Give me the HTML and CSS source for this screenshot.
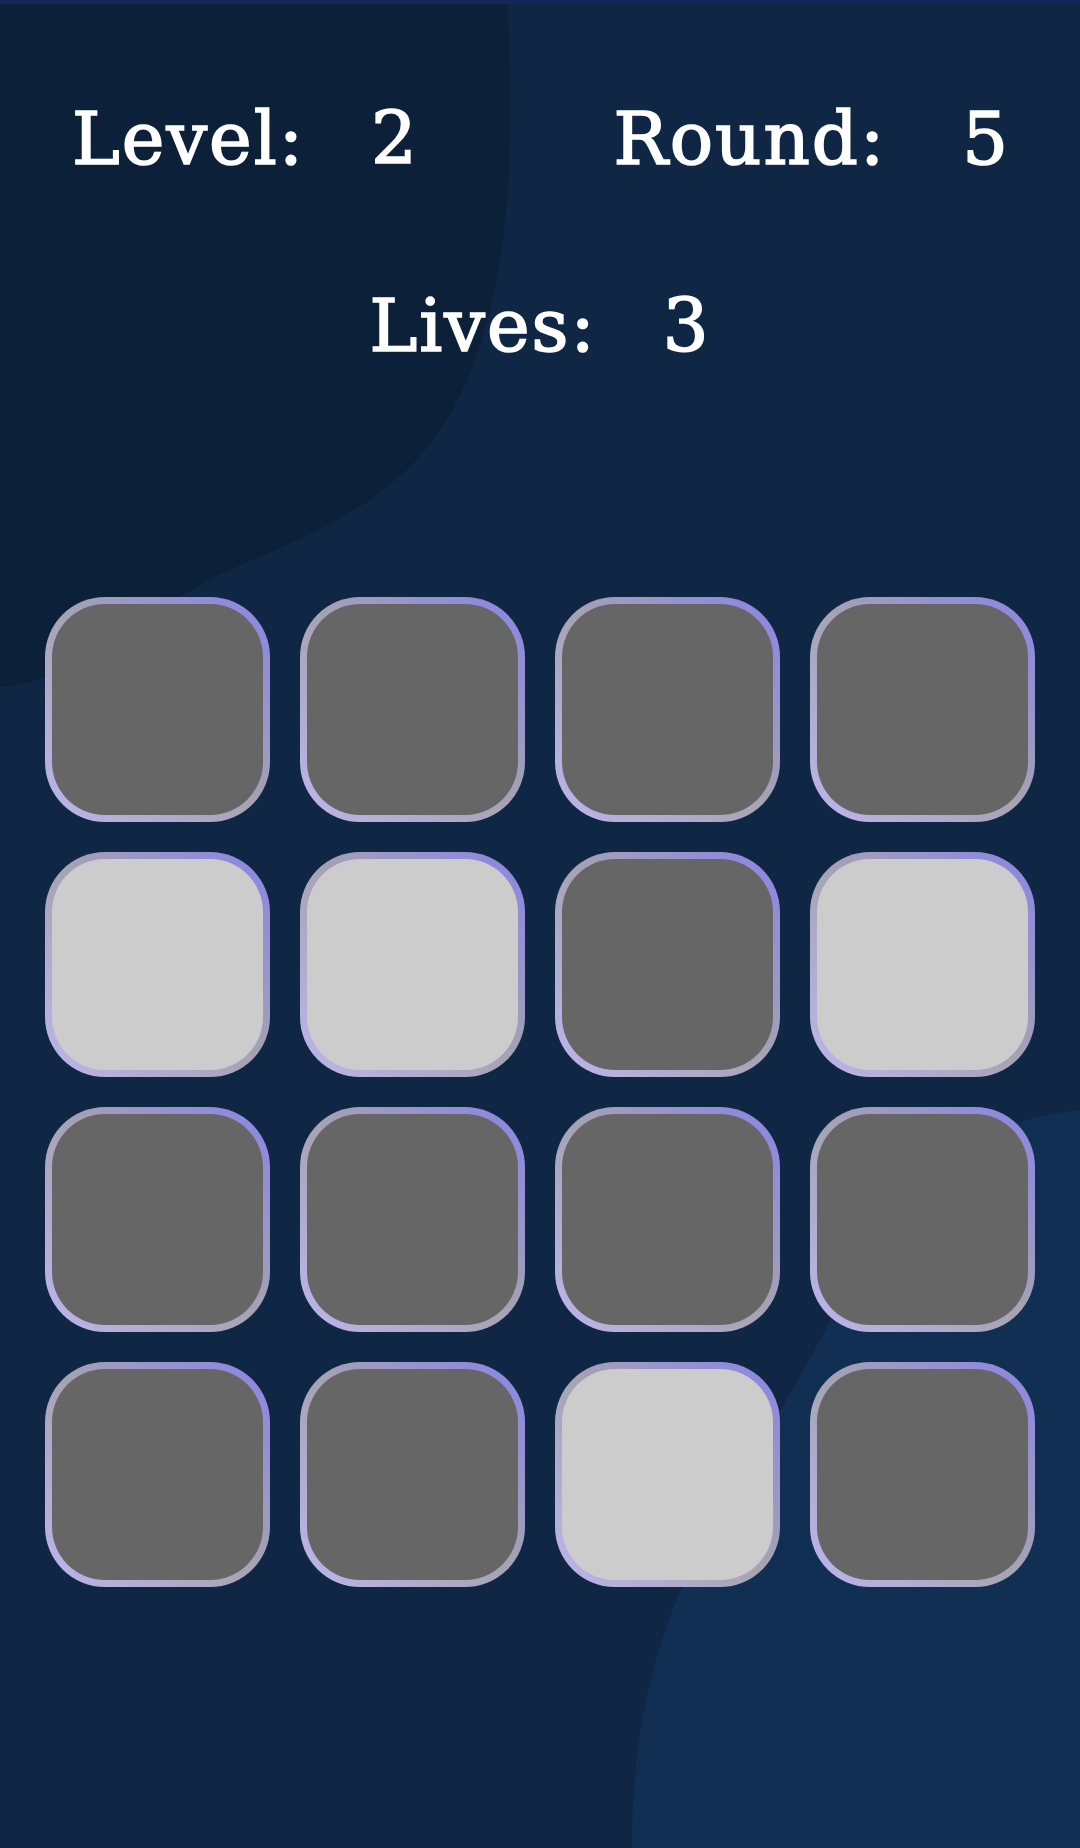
FILE: index.html
```html
<!DOCTYPE html>
<html lang="en">
<head>
<meta charset="utf-8">
<title>Memory Grid</title>
<link rel="stylesheet" href="styles.css">
</head>
<body>
<div class="screen">
  <svg class="backdrop" width="1080" height="1848" viewBox="0 0 1080 1848" aria-hidden="true">
    <path class="blob-dark" d="M0,0 L507,0 C516,140 512,300 455,405 C405,500 320,530 230,570 C140,610 80,682 0,687 Z"/>
    <path class="blob-light" d="M1080,1111 C985,1113 900,1190 820,1340 C730,1510 632,1600 632,1848 L1080,1848 Z"/>
    <rect class="top-strip" x="0" y="0" width="1080" height="4"/>
  </svg>

  <main class="game">
    <header class="stats">
      <div class="stats-row">
        <p class="stat"><span class="label">Level:</span><span class="value">2</span></p>
        <p class="stat"><span class="label">Round:</span><span class="value value-wide">5</span></p>
      </div>
      <p class="stat stat-center"><span class="label">Lives:</span><span class="value">3</span></p>
    </header>

    <section class="board">
      <div class="tile"></div>
      <div class="tile"></div>
      <div class="tile"></div>
      <div class="tile"></div>

      <div class="tile lit"></div>
      <div class="tile lit"></div>
      <div class="tile"></div>
      <div class="tile lit"></div>

      <div class="tile"></div>
      <div class="tile"></div>
      <div class="tile"></div>
      <div class="tile"></div>

      <div class="tile"></div>
      <div class="tile"></div>
      <div class="tile lit"></div>
      <div class="tile"></div>
    </section>
  </main>
</div>
</body>
</html>
```
FILE: styles.css
```css
* { box-sizing: border-box; }

html, body {
  margin: 0;
  padding: 0;
}

body {
  width: 1080px;
  height: 1848px;
  overflow: hidden;
  background: #0f2745;
  font-family: "DejaVu Serif", "Liberation Serif", serif;
  color: #ffffff;
}

.screen {
  position: relative;
  width: 1080px;
  height: 1848px;
}

.backdrop {
  position: absolute;
  left: 0;
  top: 0;
  display: block;
}

.blob-dark { fill: #0c2139; }
.blob-light { fill: #112f52; }
.top-strip { fill: #16255a; }

.game {
  position: relative;
  display: flex;
  flex-direction: column;
  padding-top: 103px;
}

.stats {
  display: flex;
  flex-direction: column;
  gap: 115px;
}

.stats-row {
  display: flex;
  justify-content: space-between;
  padding: 0 70px 0 72px;
}

.stat {
  margin: 0;
  font-size: 72px;
  line-height: 72px;
  letter-spacing: 2px;
  -webkit-text-stroke: 1.7px #ffffff;
  white-space: nowrap;
}

.stat-center {
  align-self: center;
}

.value {
  margin-left: 66px;
}

.value-wide {
  margin-left: 76px;
}

.board {
  margin-top: 235px;
  padding: 0 45px;
  display: grid;
  grid-template-columns: repeat(4, 225px);
  grid-auto-rows: 225px;
  gap: 30px;
}

.tile {
  border: 7px solid transparent;
  border-radius: 60px;
  background:
    linear-gradient(#666666, #666666) padding-box,
    linear-gradient(to top right, #bdb5ee 0%, #a6a3b2 50%, #8a84e6 100%) border-box;
}

.tile.lit {
  background:
    linear-gradient(#cccccc, #cccccc) padding-box,
    linear-gradient(to top right, #bdb5ee 0%, #a6a3b2 50%, #8a84e6 100%) border-box;
}
```
